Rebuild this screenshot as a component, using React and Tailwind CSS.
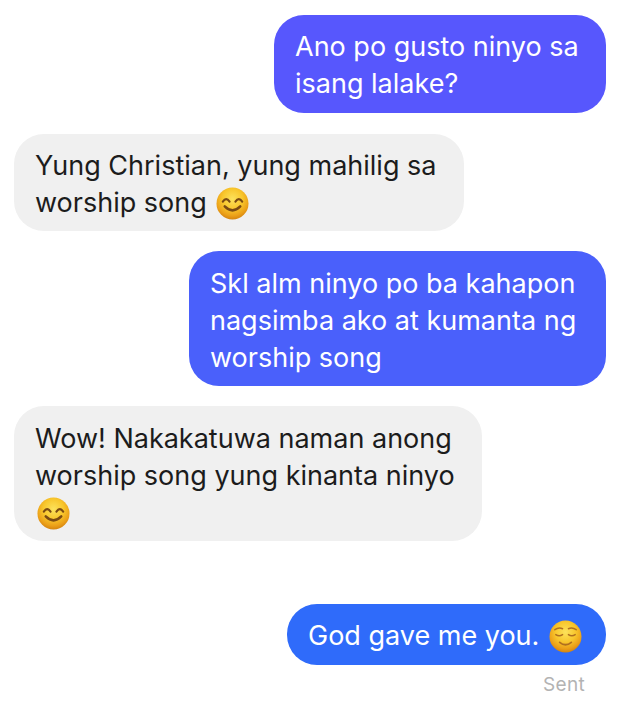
import React from 'react'

const Smile = ({ id = 'a', closed = false, className = '' }) => (
  <svg viewBox="0 0 34 34" className={`inline-block w-[33px] h-[33px] align-[-9px] ${className}`}>
    <defs>
      <radialGradient id={id} cx="50%" cy="36%" r="64%">
        <stop offset="0%" stopColor="#fce25c" />
        <stop offset="50%" stopColor="#f8c62c" />
        <stop offset="82%" stopColor="#eb9f18" />
        <stop offset="100%" stopColor="#d48410" />
      </radialGradient>
    </defs>
    <circle cx="17" cy="17" r="16.500" fill={`url(#${id})`} />
    {closed ? (
      <g fill="none" stroke="#b0701f" strokeWidth="1.500" strokeLinecap="round">
        <path d="M6 10q4-3 8-1" />
        <path d="M20 9q4-2 8 1" />
        <path d="M7 15q3.500 2.500 7 0" />
        <path d="M20 15q3.500 2.500 7 0" />
        <path d="M11 23q6 5 12 0" strokeWidth="1.800" />
      </g>
    ) : (
      <g fill="none" stroke="#7a4a12" strokeWidth="2.200" strokeLinecap="round">
        <path d="M7 15q3.500-5 7 0" />
        <path d="M20 15q3.500-5 7 0" />
        <path d="M9 20q8 8 16 0" strokeWidth="2.600" />
      </g>
    )}
  </svg>
)

const Bubble = ({ self, bg, className = '', children }) => (
  <div
    className={`${self ? 'self-end text-white' : 'self-start text-[#1c1c1c]'} ${bg} ${className} rounded-[30px] px-[21px] text-[27px] leading-[37px] whitespace-nowrap`}
  >
    {children}
  </div>
)

export default function App() {
  return (
    <div className="w-[619px] h-[720px] bg-white flex flex-col pt-[15px] pl-[14px] pr-[13px] font-['Inter',sans-serif] overflow-hidden">
      <Bubble self bg="bg-[#5757fd]" className="w-[332px] h-[98px] pt-[13px]">
        Ano po gusto ninyo sa
        <br />
        isang lalake?
      </Bubble>
      <Bubble bg="bg-[#f0f0f0]" className="w-[450px] h-[97px] mt-[21px] pt-[13px]">
        Yung Christian, yung mahilig sa
        <br />
        worship song <Smile id="s1" className="ml-[2px] relative -top-px" />
      </Bubble>
      <Bubble self bg="bg-[#4a60fb]" className="w-[417px] h-[135px] mt-[20px] pt-[14px]">
        Skl alm ninyo po ba kahapon
        <br />
        nagsimba ako at kumanta ng
        <br />
        worship song
      </Bubble>
      <Bubble bg="bg-[#f0f0f0]" className="w-[468px] h-[135px] mt-[20px] pt-[14px]">
        Wow! Nakakatuwa naman anong
        <br />
        worship song yung kinanta ninyo
        <br />
        <Smile id="s2" className="ml-[2px] relative -top-px" />
      </Bubble>
      <Bubble self bg="bg-[#2f6bfa]" className="w-[319px] h-[61px] mt-[63px] pt-[13px]">
        God gave me you. <Smile id="s3" closed className="ml-[2px] relative -top-px" />
      </Bubble>
      <div className="self-end mt-[9px] mr-[21px] text-[19px] tracking-[0.3px] leading-[22px] text-[#b3b3b3]">Sent</div>
    </div>
  )
}
